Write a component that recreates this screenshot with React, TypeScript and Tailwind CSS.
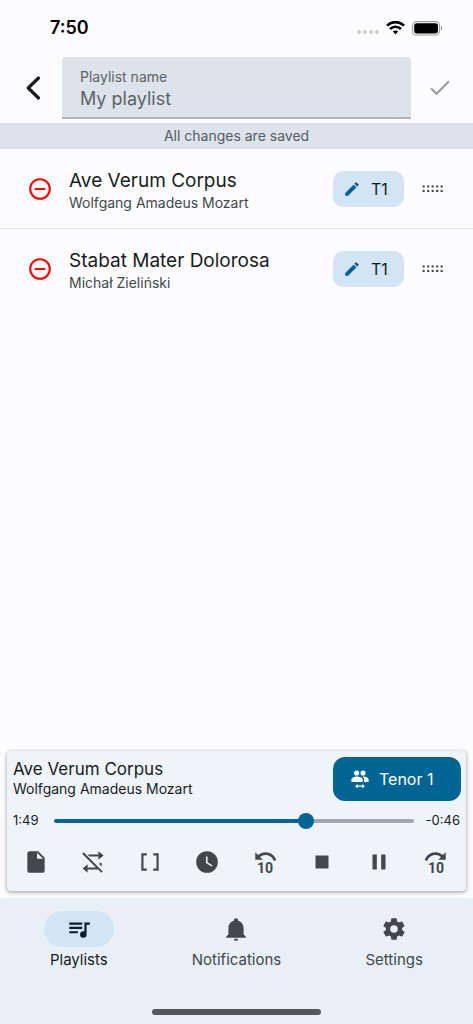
import { useState } from "react";
import type { ReactNode } from "react";

const paths = {
  minusCircle: "M12,20C7.59,20 4,16.41 4,12C4,7.59 7.59,4 12,4C16.41,4 20,7.59 20,12C20,16.41 16.41,20 12,20M12,2A10,10 0 0,0 2,12A10,10 0 0,0 12,22A10,10 0 0,0 22,12A10,10 0 0,0 12,2M7,13H17V11H7",
  pencil: "M20.71,7.04C21.1,6.65 21.1,6 20.71,5.63L18.37,3.29C18,2.9 17.35,2.9 16.96,3.29L15.12,5.12L18.87,8.87M3,17.25V21H6.75L17.81,9.93L14.06,6.18L3,17.25Z",
  file: "M13,9V3.5L18.5,9M6,2C4.89,2 4,2.89 4,4V20A2,2 0 0,0 6,22H18A2,2 0 0,0 20,20V8L14,2H6Z",
  repeatOff: "M2,4.27L3.28,3L21,20.72L19.73,22L16.73,19H7V22L2.5,18L7,14V17H14.73L2,4.27M18,12.8H20V16.4L18,14.4V12.8M17,5V2L21.8,6L17,10V7H8.82L6.82,5H17Z",
  brackets: "M15,4V6H18V18H15V20H20V4M4,4V20H9V18H6V6H9V4H4Z",
  clock: "M12,2A10,10 0 0,0 2,12A10,10 0 0,0 12,22A10,10 0 0,0 22,12A10,10 0 0,0 12,2M16.2,16.2L11,13V7H12.5V12.2L17,14.9L16.2,16.2Z",
  rewind: "M12.5,3C17.15,3 21.08,6.03 22.47,10.22L20.1,11C19.05,7.81 16.04,5.5 12.5,5.5C10.54,5.5 8.77,6.22 7.38,7.38L10,10H3V3L5.6,5.6C7.45,4 9.85,3 12.5,3Z",
  forward: "M11.5,3C14.15,3 16.55,4 18.4,5.6L21,3V10H14L16.62,7.38C15.23,6.22 13.46,5.5 11.5,5.5C7.96,5.5 4.95,7.81 3.9,11L1.53,10.22C2.92,6.03 6.85,3 11.5,3Z",
  stop: "M18,18H6V6H18V18Z",
  pause: "M14,19H18V5H14M6,19H10V5H6V19Z",
  playlist: "M15,6H3V8H15V6M15,10H3V12H15V10M3,16H11V14H3V16M17,6V14.18C16.69,14.07 16.35,14 16,14A3,3 0 0,0 13,17A3,3 0 0,0 16,20A3,3 0 0,0 19,17V8H22V6H17Z",
  bell: "M21,19V20H3V19L5,17V11C5,7.9 7.03,5.17 10,4.29C10,4.19 10,4.1 10,4A2,2 0 0,1 12,2A2,2 0 0,1 14,4C14,4.1 14,4.19 14,4.29C16.97,5.17 19,7.9 19,11V17L21,19M14,21A2,2 0 0,1 12,23A2,2 0 0,1 10,21",
  cog: "M12,15.5A3.5,3.5 0 0,1 8.5,12A3.5,3.5 0 0,1 12,8.5A3.5,3.5 0 0,1 15.5,12A3.5,3.5 0 0,1 12,15.5M19.43,12.97C19.47,12.65 19.5,12.33 19.5,12C19.5,11.67 19.47,11.34 19.43,11L21.54,9.37C21.73,9.22 21.78,8.95 21.66,8.73L19.66,5.27C19.54,5.05 19.27,4.96 19.05,5.05L16.56,6.05C16.04,5.66 15.5,5.32 14.87,5.07L14.5,2.42C14.46,2.18 14.25,2 14,2H10C9.75,2 9.54,2.18 9.5,2.42L9.13,5.07C8.5,5.32 7.96,5.66 7.44,6.05L4.95,5.05C4.73,4.96 4.46,5.05 4.34,5.27L2.34,8.73C2.21,8.95 2.27,9.22 2.46,9.37L4.57,11C4.53,11.34 4.5,11.67 4.5,12C4.5,12.33 4.53,12.65 4.57,12.97L2.46,14.63C2.27,14.78 2.21,15.05 2.34,15.27L4.34,18.73C4.46,18.95 4.73,19.03 4.95,18.95L7.44,17.94C7.96,18.34 8.5,18.68 9.13,18.93L9.5,21.58C9.54,21.82 9.75,22 10,22H14C14.25,22 14.46,21.82 14.5,21.58L14.87,18.93C15.5,18.67 16.04,18.34 16.56,17.94L19.05,18.95C19.27,19.03 19.54,18.95 19.66,18.73L21.66,15.27C21.78,15.05 21.73,14.78 21.54,14.63L19.43,12.97Z",
  accountSwitch: "M16.5 8.5C19 8.5 23.5 9.8 23.5 13V16H17.5V13C17.5 11 16.4 9.6 15 8.7L16.5 8.5M7.5 8.5C10.5 8.5 15.7 9.8 15.7 13V16H.5V13C.5 9.8 5 8.5 7.5 8.5M7.5 7.4A3.4 3.4 0 0 1 7.5 .6A3.4 3.4 0 0 1 7.5 7.4M16 7.4A3.4 3.4 0 0 1 16 .6A3.4 3.4 0 0 1 16 7.4M9 18.5V20.7H15V18.5L18.5 21.5L15 24.5V22.3H9V24.5L5.5 21.5L9 18.5Z",
};

function Icon({ name, size = 26, className = "", children }: { name: keyof typeof paths; size?: number; className?: string; children?: ReactNode }) {
  return (
    <svg width={size} height={size} viewBox="0 0 24 24" fill="currentColor" className={`overflow-visible ${className}`} aria-hidden="true">
      <path d={paths[name]} />
      {children}
    </svg>
  );
}

function Ten() {
  return (
    <text x="12" y="22" textAnchor="middle" fontSize="13" fontWeight="700" fontFamily="Roboto, sans-serif">
      10
    </text>
  );
}

const songs = [
  { title: "Ave Verum Corpus", composer: "Wolfgang Amadeus Mozart", voice: "T1" },
  { title: "Stabat Mater Dolorosa", composer: "Michał Zieliński", voice: "T1" },
];

const controls: { label: string; icon: keyof typeof paths; ten?: boolean }[] = [
  { label: "Score", icon: "file" },
  { label: "Repeat off", icon: "repeatOff" },
  { label: "Loop section", icon: "brackets" },
  { label: "Timer", icon: "clock" },
  { label: "Back 10 seconds", icon: "rewind", ten: true },
  { label: "Stop", icon: "stop" },
  { label: "Pause", icon: "pause" },
  { label: "Forward 10 seconds", icon: "forward", ten: true },
];

const tabs: { label: string; icon: keyof typeof paths; active?: boolean }[] = [
  { label: "Playlists", icon: "playlist", active: true },
  { label: "Notifications", icon: "bell" },
  { label: "Settings", icon: "cog" },
];

function StatusBar() {
  return (
    <div className="flex h-14 items-center justify-between pl-[50px] pr-[30px] text-black">
      <span className="text-lg font-semibold">7:50</span>
      <div className="flex items-center gap-[7px]">
        <svg width="22" height="18" viewBox="0 0 22 18" fill="#cbcbcd" aria-hidden="true">
          <circle cx="2" cy="13" r="2" />
          <circle cx="8" cy="13" r="2" />
          <circle cx="14" cy="13" r="2" />
          <circle cx="20" cy="13" r="2" />
        </svg>
        <svg width="19" height="14" viewBox="0 0 19 14" fill="none" stroke="#000" aria-hidden="true">
          <path d="M1 4.6C5.8 0 13.2 0 18 4.6" strokeWidth="2.7" />
          <path d="M4 8C7.1 5 11.9 5 15 8" strokeWidth="2.6" />
          <path d="M6.8 10.6C8.3 9.2 10.7 9.2 12.2 10.6L9.5 13.5Z" fill="#000" stroke="none" />
        </svg>
        <svg width="31" height="15" viewBox="0 0 31 15" aria-hidden="true">
          <rect x="0.6" y="0.6" width="27" height="13.4" rx="4" fill="none" stroke="#9b9b9d" strokeWidth="1.1" />
          <rect x="2.2" y="2.2" width="23.8" height="10.2" rx="2.6" fill="#000" />
          <path d="M29 5V9.6C30.6 9 30.6 5.6 29 5Z" fill="#9b9b9d" />
        </svg>
      </div>
    </div>
  );
}

export default function App() {
  const [name, setName] = useState("My playlist");
  const [progress, setProgress] = useState(71);

  return (
    <div className="flex min-h-screen flex-col bg-[#fcfcff] font-[Inter,sans-serif] text-[#191c1e]">
      <StatusBar />

      <header className="flex items-start pb-1 pt-px">
        <button aria-label="Back" className="flex h-[62px] w-[62px] items-center justify-center pl-1">
          <svg width="16" height="26" viewBox="0 0 16 26" fill="none" stroke="currentColor" strokeWidth="3.2" strokeLinecap="round" strokeLinejoin="round" aria-hidden="true">
            <path d="M13.5 3L3.2 13L13.5 23" />
          </svg>
        </button>
        <div className="flex h-[62px] flex-1 flex-col justify-center rounded-t border-b-2 border-[#b0b5ba] bg-[#dde3ea] px-[18px] pt-2 text-[#5d6269]">
          <label htmlFor="playlist-name" className="text-sm leading-4">Playlist name</label>
          <input
            id="playlist-name"
            value={name}
            onChange={(e) => setName(e.target.value)}
            className="w-full bg-transparent text-lg leading-7 outline-none"
          />
        </div>
        <button aria-label="Save" className="flex h-[62px] w-[62px] items-center justify-center pr-1 text-[#9c9c9e]">
          <svg width="20" height="16" viewBox="0 0 20 16" fill="none" stroke="currentColor" strokeWidth="2.2" strokeLinecap="round" aria-hidden="true">
            <path d="M1.6 9L6.6 13.8L18.2 2" />
          </svg>
        </button>
      </header>

      <p className="bg-[#dde3ea] text-center text-sm leading-[26px] text-[#555b62]">All changes are saved</p>

      <main className="flex-1">
        <ul className="divide-y divide-[#e3e4e8]">
          {songs.map((song) => (
            <li key={song.title} className="flex h-20 items-center pl-[27px] pr-[30px]">
              <button aria-label={`Remove ${song.title}`} className="text-[#ff0000]">
                <Icon name="minusCircle" />
              </button>
              <div className="ml-4 min-w-0 flex-1 pt-1">
                <h2 className="truncate text-[19px] leading-6">{song.title}</h2>
                <p className="truncate text-sm text-[#42474e]">{song.composer}</p>
              </div>
              <button className="flex h-9 w-[71px] items-center gap-2.5 rounded-[10px] bg-[#d3e5f5] pl-2.5 text-base text-[#0c1d29]">
                <Icon name="pencil" size={18} className="text-[#006494]" />
                {song.voice}
              </button>
              <button aria-label={`Move ${song.title}`} className="ml-[18px] text-[#42474e]">
                <svg width="21" height="8" viewBox="0 0 21 8" fill="currentColor" aria-hidden="true">
                  {[0, 1, 2, 3, 4].map((i) => (
                    <g key={i}>
                      <rect x={i * 4.5 + 0.6} y="0.4" width="2.1" height="2.1" />
                      <rect x={i * 4.5 + 0.6} y="4.9" width="2.1" height="2.1" />
                    </g>
                  ))}
                </svg>
              </button>
            </li>
          ))}
        </ul>
      </main>

      <section className="mx-[7px] mb-[7px] rounded bg-[#eff3fa] shadow-[0_1px_4px_rgba(0,0,0,0.4)]">
        <div className="flex items-start pl-1.5 pr-[5px] pt-1.5">
          <div className="min-w-0 flex-1">
            <h3 className="truncate text-[17px] leading-6">Ave Verum Corpus</h3>
            <p className="truncate text-sm leading-4">Wolfgang Amadeus Mozart</p>
          </div>
          <button className="flex h-11 w-32 items-center gap-2.5 rounded-xl bg-[#006494] pl-[18px] text-base text-white">
            <Icon name="accountSwitch" size={18} />
            Tenor 1
          </button>
        </div>
        <div className="flex h-10 items-center gap-3 px-1.5 text-[13px]">
          <span className="w-[29px]">1:49</span>
          <input
            type="range"
            aria-label="Position"
            value={progress}
            onChange={(e) => setProgress(Number(e.target.value))}
            style={{ backgroundImage: `linear-gradient(to right, #006494 ${progress}%, #a2a6af ${progress}%)` }}
            className="h-1 min-w-0 flex-1 appearance-none rounded-full [&::-webkit-slider-thumb]:size-4 [&::-webkit-slider-thumb]:appearance-none [&::-webkit-slider-thumb]:rounded-full [&::-webkit-slider-thumb]:bg-[#006494]"
          />
          <span>-0:46</span>
        </div>
        <div className="grid grid-cols-8 pb-4 pr-px pt-2 text-[#42474e]">
          {controls.map((c) => (
            <button key={c.label} aria-label={c.label} className="flex justify-center">
              <Icon name={c.icon}>{c.ten && <Ten />}</Icon>
            </button>
          ))}
        </div>
      </section>

      <nav className="bg-[#e8eff6] pb-[9px] pt-[13px]">
        <div className="grid grid-cols-3">
          {tabs.map((tab) => (
            <a key={tab.label} href="#" className={tab.active ? "flex flex-col items-center gap-[3px] text-[#191c1e]" : "flex flex-col items-center gap-[3px] text-[#42474e]"}>
              <span className={tab.active ? "flex h-9 w-[70px] items-center justify-center rounded-full bg-[#d3e5f5] text-[#0c1d29]" : "flex h-9 w-[70px] items-center justify-center"}>
                <Icon name={tab.icon} />
              </span>
              <span className="text-[15px] leading-5">{tab.label}</span>
            </a>
          ))}
        </div>
        <div className="mx-auto mt-[39px] h-1.5 w-[169px] rounded-full bg-[#56595c]" />
      </nav>
    </div>
  );
}
